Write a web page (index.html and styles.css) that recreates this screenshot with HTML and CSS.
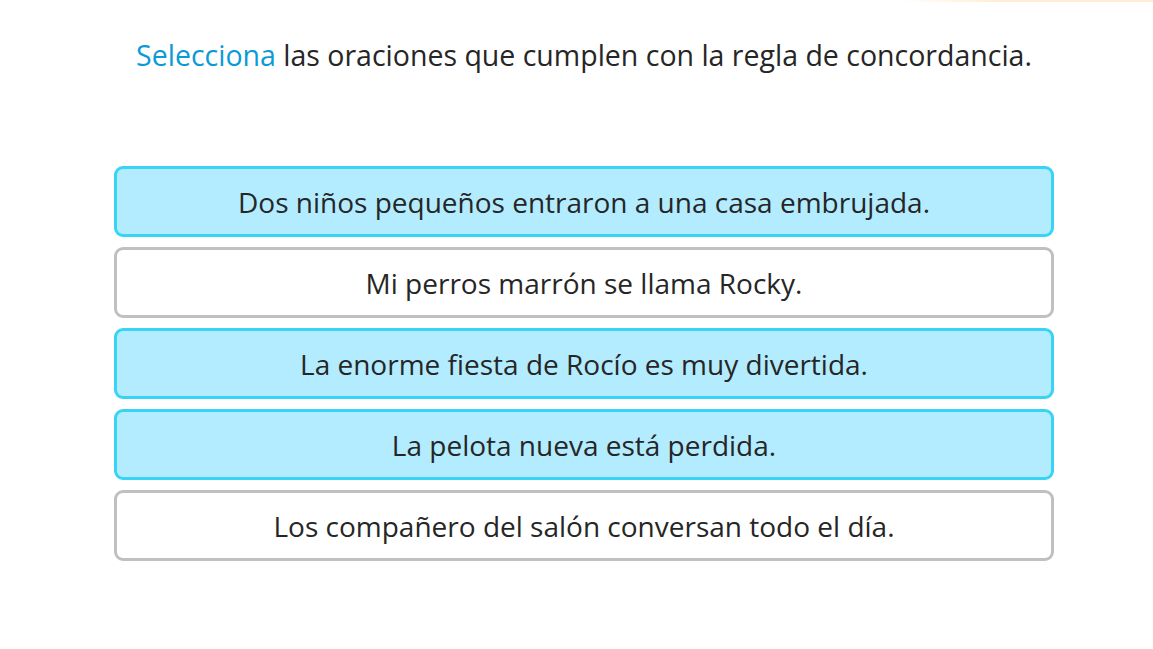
FILE: index.html
```html
<!DOCTYPE html>
<html lang="es">
<head>
<meta charset="utf-8">
<title>Concordancia</title>
<link rel="stylesheet" href="styles.css">
</head>
<body>
<div class="topline"></div>
<main class="activity">
  <p class="prompt"><span class="verb">Selecciona</span> las oraciones que cumplen con la regla de concordancia.</p>
  <div class="options">
    <div class="option selected">Dos niños pequeños entraron a una casa embrujada.</div>
    <div class="option">Mi perros marrón se llama Rocky.</div>
    <div class="option selected">La enorme fiesta de Rocío es muy divertida.</div>
    <div class="option selected">La pelota nueva está perdida.</div>
    <div class="option">Los compañero del salón conversan todo el día.</div>
  </div>
</main>
</body>
</html>
```

FILE: styles.css
```css
html, body {
  margin: 0;
  padding: 0;
  background: #ffffff;
}
body {
  font-family: "Open Sans", "Noto Sans", sans-serif;
  color: #262626;
  width: 1153px;
  height: 649px;
  overflow: hidden;
}
.topline {
  height: 2px;
  margin-left: 900px;
  background: linear-gradient(to right, rgba(255,235,200,0), rgba(255,225,180,0.6) 40%, rgba(255,225,180,0.6));
}
.activity {
  display: flex;
  flex-direction: column;
  align-items: center;
  padding-left: 15px;
}
.prompt {
  margin: 0;
  padding-top: 34px;
  font-size: 28.5px;
  line-height: 38px;
  text-align: center;
}
.verb {
  color: #0a9ad8;
}
.options {
  margin-top: 92px;
  width: 940px;
  display: flex;
  flex-direction: column;
  gap: 10px;
}
.option {
  box-sizing: border-box;
  height: 71px;
  border: 3px solid #c0c0c0;
  border-radius: 9px;
  background: #ffffff;
  display: flex;
  align-items: center;
  justify-content: center;
  font-size: 28px;
}
.option.selected {
  border-color: #38d4f5;
  background: #b3ecff;
}
```
